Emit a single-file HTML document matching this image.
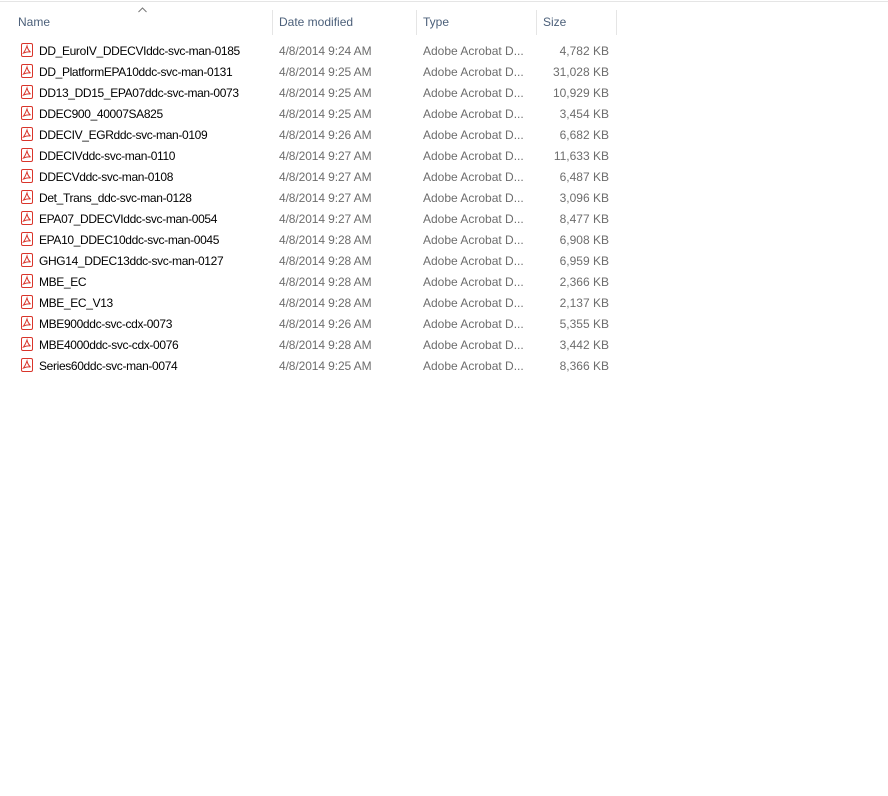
<!DOCTYPE html>
<html><head><style>
body{margin:0;width:888px;height:796px;background:#fff;font-family:"Liberation Sans",sans-serif;font-size:12px;position:relative;overflow:hidden}
.top{position:absolute;left:0;right:0;top:1px;height:1px;background:#e5e5e5}
.sep{position:absolute;top:10px;height:25px;width:1px;background:#e5e5e5}
.h{position:absolute;top:15px;color:#4c607a}
.r{position:absolute;left:0;height:21px;width:888px}
.r span{position:absolute;top:4px;white-space:nowrap}
.n{left:39px;color:#000;letter-spacing:-0.35px}
.d{left:279px;color:#6d6d6d;letter-spacing:-0.1px}
.t{left:423px;color:#6d6d6d}
.s{right:279px;color:#6d6d6d}
.ic{position:absolute;left:21px;top:3px;width:12px;height:14px}
</style></head><body>
<div class="top"></div>
<svg style="position:absolute;left:138px;top:7px" width="9" height="6"><path d="M0.5 5 L4.5 1 L8.5 5" fill="none" stroke="#777" stroke-width="1"/></svg>
<div class="h" style="left:18px">Name</div>
<div class="sep" style="left:272px"></div>
<div class="h" style="left:279px">Date modified</div>
<div class="sep" style="left:416px"></div>
<div class="h" style="left:423px">Type</div>
<div class="sep" style="left:536px"></div>
<div class="h" style="left:543px">Size</div>
<div class="sep" style="left:616px"></div>
<div class="r" style="top:40px"><svg class="ic" viewBox="0 0 12 14"><rect x="0.5" y="0.5" width="11" height="13" rx="1.5" fill="#fff" stroke="#d9352b"/><path d="M6 3 C5 6 4 8 2.5 10 C5 9 7 8.5 9.5 9 C7.5 7.5 6.5 5.5 6 3Z" fill="none" stroke="#d9352b" stroke-width="1"/></svg><span class="n">DD_EuroIV_DDECVIddc-svc-man-0185</span><span class="d">4/8/2014 9:24 AM</span><span class="t">Adobe Acrobat D...</span><span class="s">4,782 KB</span></div>
<div class="r" style="top:61px"><svg class="ic" viewBox="0 0 12 14"><rect x="0.5" y="0.5" width="11" height="13" rx="1.5" fill="#fff" stroke="#d9352b"/><path d="M6 3 C5 6 4 8 2.5 10 C5 9 7 8.5 9.5 9 C7.5 7.5 6.5 5.5 6 3Z" fill="none" stroke="#d9352b" stroke-width="1"/></svg><span class="n">DD_PlatformEPA10ddc-svc-man-0131</span><span class="d">4/8/2014 9:25 AM</span><span class="t">Adobe Acrobat D...</span><span class="s">31,028 KB</span></div>
<div class="r" style="top:82px"><svg class="ic" viewBox="0 0 12 14"><rect x="0.5" y="0.5" width="11" height="13" rx="1.5" fill="#fff" stroke="#d9352b"/><path d="M6 3 C5 6 4 8 2.5 10 C5 9 7 8.5 9.5 9 C7.5 7.5 6.5 5.5 6 3Z" fill="none" stroke="#d9352b" stroke-width="1"/></svg><span class="n">DD13_DD15_EPA07ddc-svc-man-0073</span><span class="d">4/8/2014 9:25 AM</span><span class="t">Adobe Acrobat D...</span><span class="s">10,929 KB</span></div>
<div class="r" style="top:103px"><svg class="ic" viewBox="0 0 12 14"><rect x="0.5" y="0.5" width="11" height="13" rx="1.5" fill="#fff" stroke="#d9352b"/><path d="M6 3 C5 6 4 8 2.5 10 C5 9 7 8.5 9.5 9 C7.5 7.5 6.5 5.5 6 3Z" fill="none" stroke="#d9352b" stroke-width="1"/></svg><span class="n">DDEC900_40007SA825</span><span class="d">4/8/2014 9:25 AM</span><span class="t">Adobe Acrobat D...</span><span class="s">3,454 KB</span></div>
<div class="r" style="top:124px"><svg class="ic" viewBox="0 0 12 14"><rect x="0.5" y="0.5" width="11" height="13" rx="1.5" fill="#fff" stroke="#d9352b"/><path d="M6 3 C5 6 4 8 2.5 10 C5 9 7 8.5 9.5 9 C7.5 7.5 6.5 5.5 6 3Z" fill="none" stroke="#d9352b" stroke-width="1"/></svg><span class="n">DDECIV_EGRddc-svc-man-0109</span><span class="d">4/8/2014 9:26 AM</span><span class="t">Adobe Acrobat D...</span><span class="s">6,682 KB</span></div>
<div class="r" style="top:145px"><svg class="ic" viewBox="0 0 12 14"><rect x="0.5" y="0.5" width="11" height="13" rx="1.5" fill="#fff" stroke="#d9352b"/><path d="M6 3 C5 6 4 8 2.5 10 C5 9 7 8.5 9.5 9 C7.5 7.5 6.5 5.5 6 3Z" fill="none" stroke="#d9352b" stroke-width="1"/></svg><span class="n">DDECIVddc-svc-man-0110</span><span class="d">4/8/2014 9:27 AM</span><span class="t">Adobe Acrobat D...</span><span class="s">11,633 KB</span></div>
<div class="r" style="top:166px"><svg class="ic" viewBox="0 0 12 14"><rect x="0.5" y="0.5" width="11" height="13" rx="1.5" fill="#fff" stroke="#d9352b"/><path d="M6 3 C5 6 4 8 2.5 10 C5 9 7 8.5 9.5 9 C7.5 7.5 6.5 5.5 6 3Z" fill="none" stroke="#d9352b" stroke-width="1"/></svg><span class="n">DDECVddc-svc-man-0108</span><span class="d">4/8/2014 9:27 AM</span><span class="t">Adobe Acrobat D...</span><span class="s">6,487 KB</span></div>
<div class="r" style="top:187px"><svg class="ic" viewBox="0 0 12 14"><rect x="0.5" y="0.5" width="11" height="13" rx="1.5" fill="#fff" stroke="#d9352b"/><path d="M6 3 C5 6 4 8 2.5 10 C5 9 7 8.5 9.5 9 C7.5 7.5 6.5 5.5 6 3Z" fill="none" stroke="#d9352b" stroke-width="1"/></svg><span class="n">Det_Trans_ddc-svc-man-0128</span><span class="d">4/8/2014 9:27 AM</span><span class="t">Adobe Acrobat D...</span><span class="s">3,096 KB</span></div>
<div class="r" style="top:208px"><svg class="ic" viewBox="0 0 12 14"><rect x="0.5" y="0.5" width="11" height="13" rx="1.5" fill="#fff" stroke="#d9352b"/><path d="M6 3 C5 6 4 8 2.5 10 C5 9 7 8.5 9.5 9 C7.5 7.5 6.5 5.5 6 3Z" fill="none" stroke="#d9352b" stroke-width="1"/></svg><span class="n">EPA07_DDECVIddc-svc-man-0054</span><span class="d">4/8/2014 9:27 AM</span><span class="t">Adobe Acrobat D...</span><span class="s">8,477 KB</span></div>
<div class="r" style="top:229px"><svg class="ic" viewBox="0 0 12 14"><rect x="0.5" y="0.5" width="11" height="13" rx="1.5" fill="#fff" stroke="#d9352b"/><path d="M6 3 C5 6 4 8 2.5 10 C5 9 7 8.5 9.5 9 C7.5 7.5 6.5 5.5 6 3Z" fill="none" stroke="#d9352b" stroke-width="1"/></svg><span class="n">EPA10_DDEC10ddc-svc-man-0045</span><span class="d">4/8/2014 9:28 AM</span><span class="t">Adobe Acrobat D...</span><span class="s">6,908 KB</span></div>
<div class="r" style="top:250px"><svg class="ic" viewBox="0 0 12 14"><rect x="0.5" y="0.5" width="11" height="13" rx="1.5" fill="#fff" stroke="#d9352b"/><path d="M6 3 C5 6 4 8 2.5 10 C5 9 7 8.5 9.5 9 C7.5 7.5 6.5 5.5 6 3Z" fill="none" stroke="#d9352b" stroke-width="1"/></svg><span class="n">GHG14_DDEC13ddc-svc-man-0127</span><span class="d">4/8/2014 9:28 AM</span><span class="t">Adobe Acrobat D...</span><span class="s">6,959 KB</span></div>
<div class="r" style="top:271px"><svg class="ic" viewBox="0 0 12 14"><rect x="0.5" y="0.5" width="11" height="13" rx="1.5" fill="#fff" stroke="#d9352b"/><path d="M6 3 C5 6 4 8 2.5 10 C5 9 7 8.5 9.5 9 C7.5 7.5 6.5 5.5 6 3Z" fill="none" stroke="#d9352b" stroke-width="1"/></svg><span class="n">MBE_EC</span><span class="d">4/8/2014 9:28 AM</span><span class="t">Adobe Acrobat D...</span><span class="s">2,366 KB</span></div>
<div class="r" style="top:292px"><svg class="ic" viewBox="0 0 12 14"><rect x="0.5" y="0.5" width="11" height="13" rx="1.5" fill="#fff" stroke="#d9352b"/><path d="M6 3 C5 6 4 8 2.5 10 C5 9 7 8.5 9.5 9 C7.5 7.5 6.5 5.5 6 3Z" fill="none" stroke="#d9352b" stroke-width="1"/></svg><span class="n">MBE_EC_V13</span><span class="d">4/8/2014 9:28 AM</span><span class="t">Adobe Acrobat D...</span><span class="s">2,137 KB</span></div>
<div class="r" style="top:313px"><svg class="ic" viewBox="0 0 12 14"><rect x="0.5" y="0.5" width="11" height="13" rx="1.5" fill="#fff" stroke="#d9352b"/><path d="M6 3 C5 6 4 8 2.5 10 C5 9 7 8.5 9.5 9 C7.5 7.5 6.5 5.5 6 3Z" fill="none" stroke="#d9352b" stroke-width="1"/></svg><span class="n">MBE900ddc-svc-cdx-0073</span><span class="d">4/8/2014 9:26 AM</span><span class="t">Adobe Acrobat D...</span><span class="s">5,355 KB</span></div>
<div class="r" style="top:334px"><svg class="ic" viewBox="0 0 12 14"><rect x="0.5" y="0.5" width="11" height="13" rx="1.5" fill="#fff" stroke="#d9352b"/><path d="M6 3 C5 6 4 8 2.5 10 C5 9 7 8.5 9.5 9 C7.5 7.5 6.5 5.5 6 3Z" fill="none" stroke="#d9352b" stroke-width="1"/></svg><span class="n">MBE4000ddc-svc-cdx-0076</span><span class="d">4/8/2014 9:28 AM</span><span class="t">Adobe Acrobat D...</span><span class="s">3,442 KB</span></div>
<div class="r" style="top:355px"><svg class="ic" viewBox="0 0 12 14"><rect x="0.5" y="0.5" width="11" height="13" rx="1.5" fill="#fff" stroke="#d9352b"/><path d="M6 3 C5 6 4 8 2.5 10 C5 9 7 8.5 9.5 9 C7.5 7.5 6.5 5.5 6 3Z" fill="none" stroke="#d9352b" stroke-width="1"/></svg><span class="n">Series60ddc-svc-man-0074</span><span class="d">4/8/2014 9:25 AM</span><span class="t">Adobe Acrobat D...</span><span class="s">8,366 KB</span></div>
</body></html>
